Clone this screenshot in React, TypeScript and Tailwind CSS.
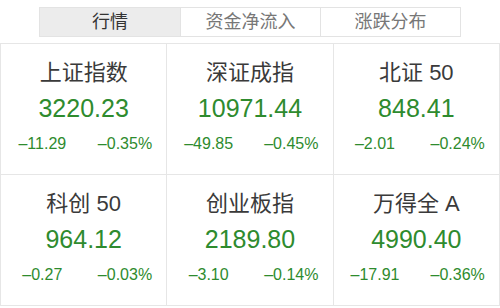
const tabs = ["行情", "资金净流入", "涨跌分布"]

const indices = [
  { name: "上证指数", value: "3220.23", change: "–11.29", pct: "–0.35%" },
  { name: "深证成指", value: "10971.44", change: "–49.85", pct: "–0.45%" },
  { name: "北证 50", value: "848.41", change: "–2.01", pct: "–0.24%" },
  { name: "科创 50", value: "964.12", change: "–0.27", pct: "–0.03%" },
  { name: "创业板指", value: "2189.80", change: "–3.10", pct: "–0.14%" },
  { name: "万得全 A", value: "4990.40", change: "–17.91", pct: "–0.36%" },
]

const font = { fontFamily: '"Liberation Sans", "Noto Sans CJK SC", sans-serif' }

export default function App() {
  return (
    <div className="w-[500px] h-[308px] bg-white overflow-hidden" style={font}>
      <div className="flex justify-center pt-[7px]">
        <div className="flex border border-[#e3e3e3]">
          {tabs.map((t, i) => (
            <div
              key={t}
              className={
                "w-[140px] h-[28px] flex items-center justify-center text-[18px] " +
                (i === 0
                  ? "bg-[#ececec] text-[#333]"
                  : "bg-white text-[#777] border-l border-[#e3e3e3]")
              }
            >
              {t}
            </div>
          ))}
        </div>
      </div>

      <div className="mt-[6px] grid grid-cols-3 border-t border-l border-[#e6e6e6]">
        {indices.map((d) => (
          <div
            key={d.name}
            className="h-[131px] border-r border-b border-[#e6e6e6] flex flex-col items-center pt-[18px]"
          >
            <div className="text-[22px] leading-[22px] text-[#3a3a3a] whitespace-pre">{d.name}</div>
            <div className="mt-[9px] text-[25px] leading-[30px] text-[#2e8b2e]">{d.value}</div>
            <div className="mt-[11px] w-full grid grid-cols-2 text-[16px] leading-[20px] text-[#2e8b2e]">
              <span className="text-center">{d.change}</span>
              <span className="text-center">{d.pct}</span>
            </div>
          </div>
        ))}
      </div>
    </div>
  )
}
